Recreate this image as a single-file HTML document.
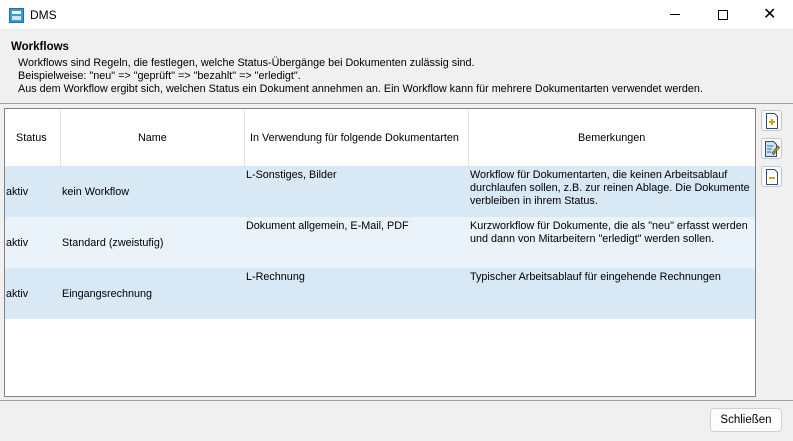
<!DOCTYPE html>
<html><head><meta charset="utf-8"><style>
*{margin:0;padding:0;box-sizing:border-box}
body{width:793px;height:441px;overflow:hidden;background:#f0f0f0;font-family:"Liberation Sans",sans-serif;font-size:10.8px;color:#000;position:relative}
.a{position:absolute;white-space:nowrap}
.t{line-height:13px}
</style></head><body>
<div class="a" style="left:0;top:0;width:793px;height:30px;background:#fff;border-bottom:1px solid #e8e8e8"></div>
<svg class="a" style="left:9px;top:8px" width="15" height="15" viewBox="0 0 15 15"><rect x="0.5" y="0.5" width="14" height="14" fill="#3a9ad9" stroke="#1f6fa8"/><rect x="3" y="3" width="9" height="3" fill="#fff"/><rect x="3" y="8" width="9" height="4" fill="#cfe6f7"/></svg>
<div class="a" style="left:30px;top:8px;font-size:12px">DMS</div>
<div class="a" style="left:670px;top:14px;width:10px;height:1px;background:#000"></div>
<div class="a" style="left:718px;top:10px;width:10px;height:10px;border:1px solid #000"></div>
<div class="a" style="left:763px;top:4px;font-size:16px;font-weight:300">✕</div>
<div class="a" style="left:11px;top:41px;font-weight:bold;font-size:11.5px">Workflows</div>
<div class="a t" style="left:18px;top:57px">Workflows sind Regeln, die festlegen, welche Status-Übergänge bei Dokumenten zulässig sind.<br>Beispielweise: "neu" =&gt; "geprüft" =&gt; "bezahlt" =&gt; "erledigt".<br>Aus dem Workflow ergibt sich, welchen Status ein Dokument annehmen an. Ein Workflow kann für mehrere Dokumentarten verwendet werden.</div>
<div class="a" style="left:0;top:103px;width:793px;height:1px;background:#a0a0a0"></div>
<div class="a" style="left:4px;top:108px;width:752px;height:289px;background:#fff;border:1px solid #828282"></div>
<div class="a" style="left:5px;top:166px;width:750px;height:51px;background:#d9e8f5"></div>
<div class="a" style="left:5px;top:217px;width:750px;height:51px;background:#eaf2fa"></div>
<div class="a" style="left:5px;top:268px;width:750px;height:51px;background:#d9e8f5"></div>
<div class="a" style="left:60px;top:109px;width:1px;height:57px;background:#e4e4e4"></div>
<div class="a" style="left:244px;top:109px;width:1px;height:57px;background:#e4e4e4"></div>
<div class="a" style="left:468px;top:109px;width:1px;height:57px;background:#e4e4e4"></div>
<div class="a" style="left:16px;top:132px">Status</div>
<div class="a" style="left:138px;top:132px">Name</div>
<div class="a" style="left:250px;top:132px">In Verwendung für folgende Dokumentarten</div>
<div class="a" style="left:578px;top:132px">Bemerkungen</div>
<div class="a" style="left:6px;top:186px">aktiv</div>
<div class="a" style="left:62px;top:186px">kein Workflow</div>
<div class="a" style="left:246px;top:169px">L-Sonstiges, Bilder</div>
<div class="a t" style="left:470px;top:169px">Workflow für Dokumentarten, die keinen Arbeitsablauf<br>durchlaufen sollen, z.B. zur reinen Ablage. Die Dokumente<br>verbleiben in ihrem Status.</div>
<div class="a" style="left:6px;top:237px">aktiv</div>
<div class="a" style="left:62px;top:237px">Standard (zweistufig)</div>
<div class="a" style="left:246px;top:220px">Dokument allgemein, E-Mail, PDF</div>
<div class="a t" style="left:470px;top:220px">Kurzworkflow für Dokumente, die als "neu" erfasst werden<br>und dann von Mitarbeitern "erledigt" werden sollen.</div>
<div class="a" style="left:6px;top:288px">aktiv</div>
<div class="a" style="left:62px;top:288px">Eingangsrechnung</div>
<div class="a" style="left:246px;top:271px">L-Rechnung</div>
<div class="a" style="left:470px;top:271px">Typischer Arbeitsablauf für eingehende Rechnungen</div>
<div class="a" style="left:761px;top:110px;width:21px;height:21px;border:1px solid #c8c8c8;border-radius:3px;background:#fafafa"></div>
<div class="a" style="left:761px;top:138px;width:21px;height:21px;border:1px solid #c8c8c8;border-radius:3px;background:#fafafa"></div>
<div class="a" style="left:761px;top:166px;width:21px;height:21px;border:1px solid #c8c8c8;border-radius:3px;background:#fafafa"></div>
<svg class="a" style="left:765px;top:113px" width="14" height="16"><path d="M1.5 .5h8l3 3v12h-11z" fill="#fff" stroke="#2a4f7a"/><path d="M4 9h6M7 6v6" stroke="#e0a000" stroke-width="2"/></svg>
<svg class="a" style="left:764px;top:141px" width="16" height="16"><path d="M1.5 .5h8l3 3v12h-11z" fill="#cfe3f7" stroke="#2a4f7a"/><path d="M3 5h6M3 8h5M3 11h4" stroke="#2a6fb0"/><path d="M8 12l6-7 1.5 1.5-6 7z" fill="#e0a000" stroke="#333" stroke-width=".6"/></svg>
<svg class="a" style="left:765px;top:169px" width="14" height="16"><path d="M1.5 .5h8l3 3v12h-11z" fill="#fff" stroke="#2a4f7a"/><path d="M4 9h6" stroke="#e0a000" stroke-width="2"/></svg>
<div class="a" style="left:0;top:400px;width:793px;height:1px;background:#a0a0a0"></div>
<div class="a" style="left:710px;top:408px;width:72px;height:24px;background:#fdfdfd;border:1px solid #d0d0d0;border-radius:4px;text-align:center;line-height:22px;font-size:11.5px">Schließen</div>
</body></html>
